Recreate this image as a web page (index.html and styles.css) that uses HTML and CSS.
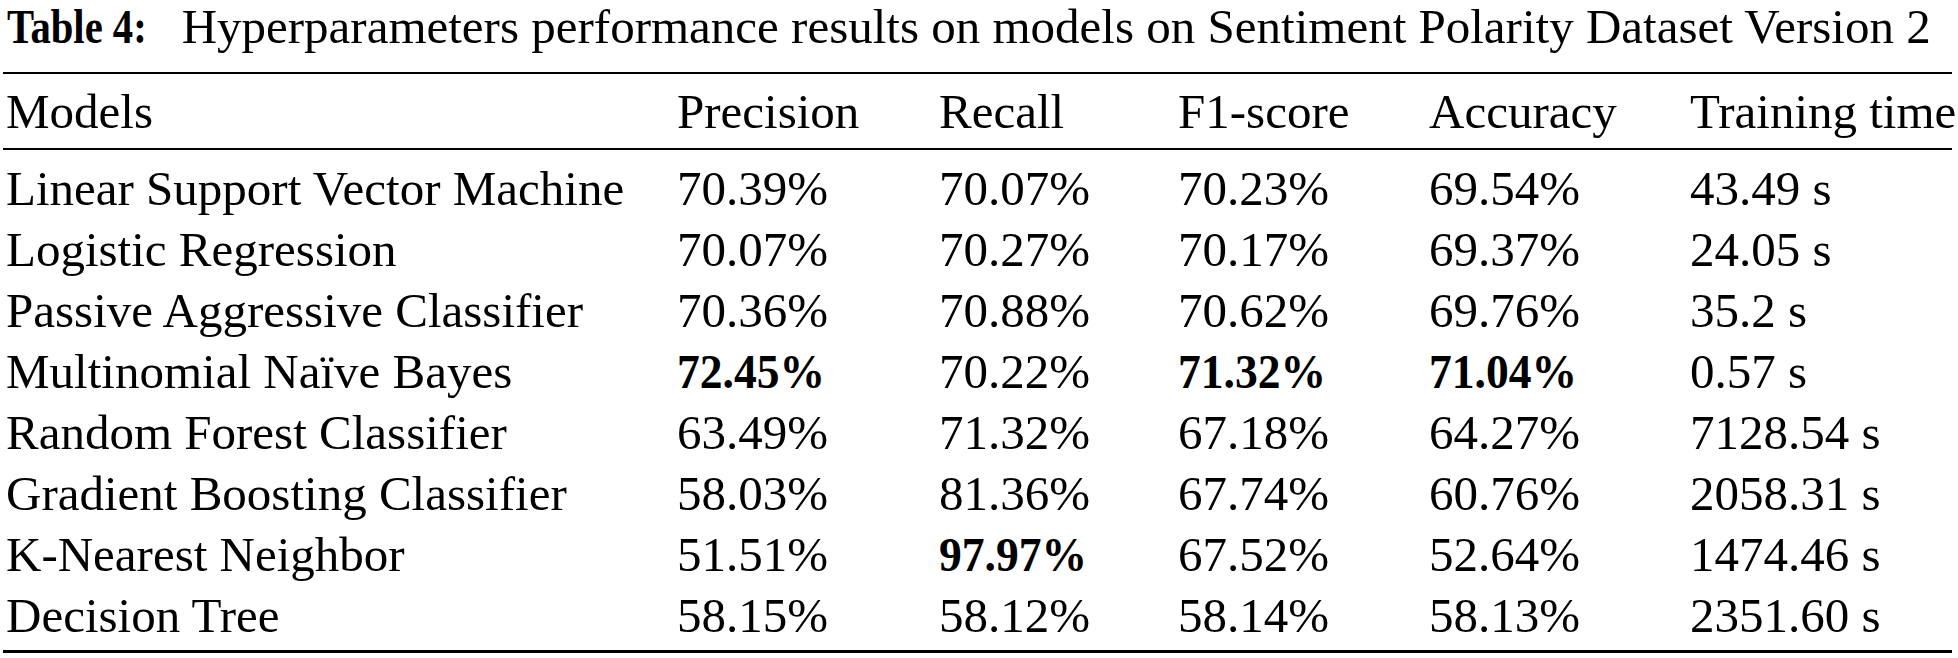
FILE: index.html
```html
<!DOCTYPE html>
<html>
<head>
<meta charset="utf-8">
<link rel="stylesheet" href="styles.css">
</head>
<body>
<div class="wrap">
  <div class="caption"><b class="label">Table 4:</b> Hyperparameters performance results on models on Sentiment Polarity Dataset Version 2</div>
  <div class="table">
    <div class="row head">
      <div>Models</div><div>Precision</div><div>Recall</div><div>F1-score</div><div>Accuracy</div><div>Training time</div>
    </div>
    <div class="body">
      <div class="row"><div>Linear Support Vector Machine</div><div>70.39%</div><div>70.07%</div><div>70.23%</div><div>69.54%</div><div>43.49 s</div></div>
      <div class="row"><div>Logistic Regression</div><div>70.07%</div><div>70.27%</div><div>70.17%</div><div>69.37%</div><div>24.05 s</div></div>
      <div class="row"><div>Passive Aggressive Classifier</div><div>70.36%</div><div>70.88%</div><div>70.62%</div><div>69.76%</div><div>35.2 s</div></div>
      <div class="row"><div>Multinomial Naïve Bayes</div><div><b class="b">72.45%</b></div><div>70.22%</div><div><b class="b">71.32%</b></div><div><b class="b">71.04%</b></div><div>0.57 s</div></div>
      <div class="row"><div>Random Forest Classifier</div><div>63.49%</div><div>71.32%</div><div>67.18%</div><div>64.27%</div><div>7128.54 s</div></div>
      <div class="row"><div>Gradient Boosting Classifier</div><div>58.03%</div><div>81.36%</div><div>67.74%</div><div>60.76%</div><div>2058.31 s</div></div>
      <div class="row"><div>K-Nearest Neighbor</div><div>51.51%</div><div><b class="b">97.97%</b></div><div>67.52%</div><div>52.64%</div><div>1474.46 s</div></div>
      <div class="row"><div>Decision Tree</div><div>58.15%</div><div>58.12%</div><div>58.14%</div><div>58.13%</div><div>2351.60 s</div></div>
    </div>
  </div>
</div>
</body>
</html>
```
FILE: styles.css
```css
html, body {
  margin: 0;
  padding: 0;
  background: #fff;
}
body {
  font-family: "Liberation Serif", "Times New Roman", serif;
  color: #000;
}
.wrap {
  width: 1949px;
  padding: 0 6px 0 3px;
}
.caption {
  font-size: 49px;
  line-height: 54px;
  padding-left: 4px;
  white-space: nowrap;
}
.label {
  display: inline-block;
  font-weight: bold;
  transform: scaleX(0.83);
  transform-origin: left center;
  margin-right: -6px;
}
.table {
  margin-top: 18px;
  border-top: 2px solid #000;
  border-bottom: 3px solid #000;
}
.row {
  display: grid;
  grid-template-columns: 671px 262px 239px 251px 261px 1fr;
  font-size: 49px;
  line-height: 61px;
  padding-left: 3px;
  white-space: nowrap;
}
.head {
  height: 74px;
  align-items: center;
  border-bottom: 2px solid #000;
}
.body {
  padding: 8px 0 4px;
}
.b {
  display: inline-block;
  font-weight: bold;
  transform: scaleX(0.93);
  transform-origin: left center;
}
```
